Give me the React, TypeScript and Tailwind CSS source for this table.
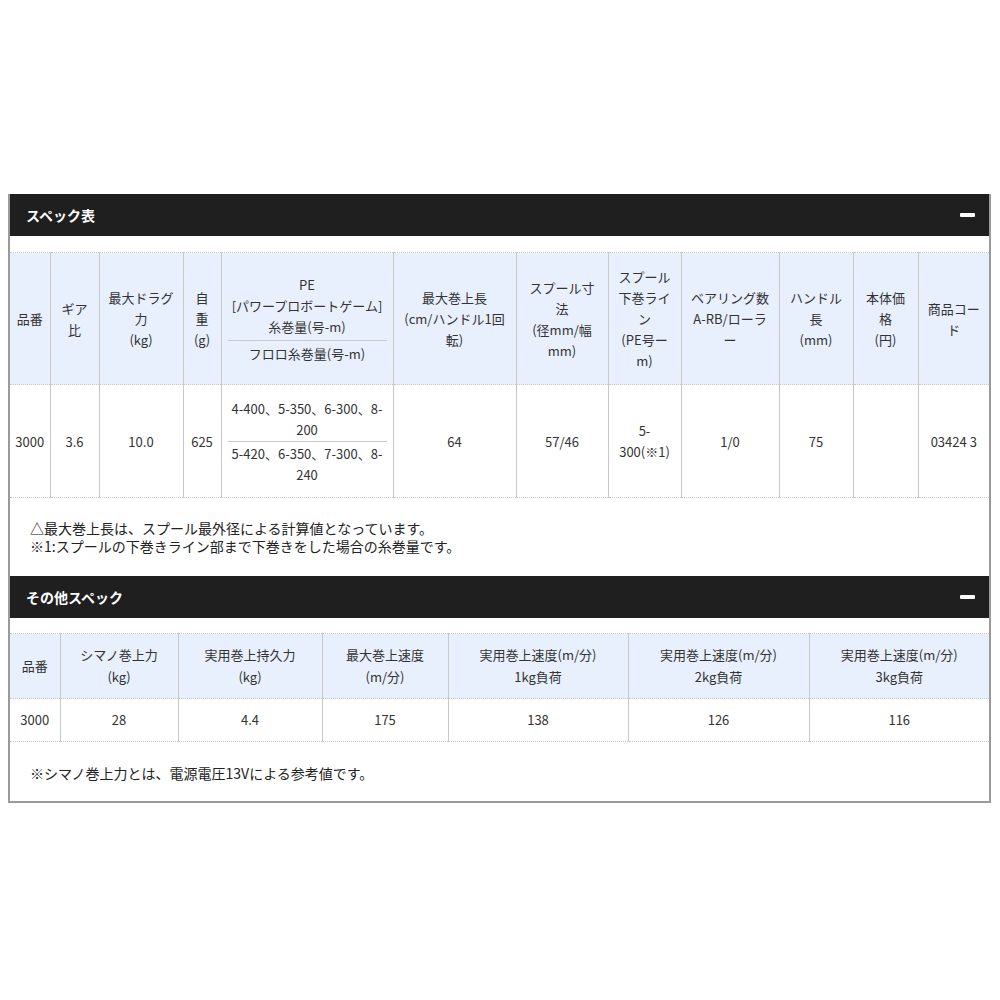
const cell =
  'border-r border-y border-[#c9c9c9] [border-top-style:dotted] [border-bottom-style:dotted] text-center align-middle font-normal'

function Bar({ title }: { title: string }) {
  return (
    <div className="flex h-[42px] items-center justify-between bg-[#1f1f1f] pl-[16px] pr-[14px]">
      <span className="text-[14px] font-bold text-white">{title}</span>
      <span className="block h-[4px] w-[15px] rounded-[1px] bg-white" />
    </div>
  )
}

const specHead: React.ReactNode[] = [
  '品番',
  <>ギア<br />比</>,
  <>最大ドラグ<br />力<br />(kg)</>,
  <>自<br />重<br />(g)</>,
  null,
  <>最大巻上長<br />(cm/ハンドル1回<br />転)</>,
  <>スプール寸<br />法<br />(径mm/幅<br />mm)</>,
  <>スプール<br />下巻ライ<br />ン<br />(PE号ー<br />m)</>,
  <>ベアリング数<br />A-RB/ローラ<br />ー</>,
  <>ハンドル<br />長<br />(mm)</>,
  <>本体価<br />格<br />(円)</>,
  <>商品コー<br />ド</>,
]

const specRow: React.ReactNode[] = [
  '3000',
  '3.6',
  '10.0',
  '625',
  null,
  '64',
  '57/46',
  <>5-<br />300(※1)</>,
  '1/0',
  '75',
  '',
  '03424 3',
]

const specCols = [40, 49, 84, 38, 172, 123, 92, 73, 98, 74, 65, 71]
const otherCols = [50, 118, 144, 126, 180, 181, 180]

const otherHead: React.ReactNode[] = [
  '品番',
  <>シマノ巻上力<br />(kg)</>,
  <>実用巻上持久力<br />(kg)</>,
  <>最大巻上速度<br />(m/分)</>,
  <>実用巻上速度(m/分)<br />1kg負荷</>,
  <>実用巻上速度(m/分)<br />2kg負荷</>,
  <>実用巻上速度(m/分)<br />3kg負荷</>,
]
const otherRow = ['3000', '28', '4.4', '175', '138', '126', '116']

export default function App() {
  return (
    <div className="min-h-screen bg-white pt-[194px] font-['Noto_Sans_CJK_JP','Noto_Sans',sans-serif] text-[#333]">
      <div className="ml-[8px] w-[983px] border-x-2 border-b-2 border-[#9a9a9a]">
        {/* スペック表 */}
        <Bar title="スペック表" />
        <div className="pt-[16px]">
          <table className="w-[979px] table-fixed border-collapse text-[13px] leading-[21px]">
            <colgroup>
              {specCols.map((w, i) => (
                <col key={i} style={{ width: w }} />
              ))}
            </colgroup>
            <thead>
              <tr className="h-[132px] bg-[#e7f0fc]">
                {specHead.map((h, i) =>
                  i === 4 ? (
                    <th key={i} className={`${cell} px-[6px]`}>
                      <div className="border-b border-[#c9c9c9] pb-[3px]">
                        PE<br />[パワープロボートゲーム]<br />糸巻量(号-m)
                      </div>
                      <div className="pt-[2px]">フロロ糸巻量(号-m)</div>
                    </th>
                  ) : (
                    <th key={i} className={`${cell} ${i === 11 ? 'border-r-0' : ''}`}>
                      {h}
                    </th>
                  ),
                )}
              </tr>
            </thead>
            <tbody>
              <tr className="h-[113px]">
                {specRow.map((d, i) =>
                  i === 4 ? (
                    <td key={i} className={`${cell} px-[6px]`}>
                      <div className="border-b border-[#c9c9c9] pb-[1px]">
                        4-400、5-350、6-300、8-<br />200
                      </div>
                      <div className="pt-[1px]">
                        5-420、6-350、7-300、8-<br />240
                      </div>
                    </td>
                  ) : (
                    <td key={i} className={`${cell} ${i === 11 ? 'border-r-0' : ''}`}>
                      {d}
                    </td>
                  ),
                )}
              </tr>
            </tbody>
          </table>
          <div className="h-[78px] pl-[20px] pt-[21px] text-[14px] leading-[18px] text-[#222]">
            <p>△最大巻上長は、スプール最外径による計算値となっています。</p>
            <p>※1:スプールの下巻きライン部まで下巻きをした場合の糸巻量です。</p>
          </div>
        </div>

        {/* その他スペック */}
        <Bar title="その他スペック" />
        <div className="pt-[15px]">
          <table className="w-[979px] table-fixed border-collapse text-[13px] leading-[22px]">
            <colgroup>
              {otherCols.map((w, i) => (
                <col key={i} style={{ width: w }} />
              ))}
            </colgroup>
            <thead>
              <tr className="h-[65px] bg-[#e7f0fc]">
                {otherHead.map((h, i) => (
                  <th key={i} className={`${cell} ${i === 6 ? 'border-r-0' : ''}`}>
                    {h}
                  </th>
                ))}
              </tr>
            </thead>
            <tbody>
              <tr className="h-[43px]">
                {otherRow.map((d, i) => (
                  <td key={i} className={`${cell} ${i === 6 ? 'border-r-0' : ''}`}>
                    {d}
                  </td>
                ))}
              </tr>
            </tbody>
          </table>
          <div className="h-[59px] pl-[20px] pt-[22px] text-[14px] leading-[18px] text-[#222]">
            <p>※シマノ巻上力とは、電源電圧13Vによる参考値です。</p>
          </div>
        </div>
      </div>
    </div>
  )
}
